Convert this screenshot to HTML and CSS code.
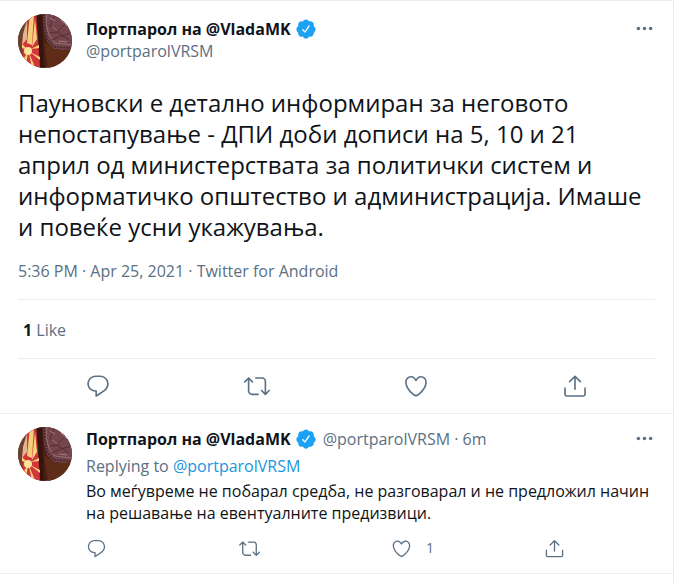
FILE: index.html
```
<!DOCTYPE html>
<html lang="mk">
<head>
    <meta charset="UTF-8">
    <meta name="viewport" content="width=device-width, initial-scale=1.0">
    <title>Портпарол на @VladaMK</title>
    <link rel="stylesheet" href="styles.css">
</head>
<body>
    <!-- Shared icons -->
    <svg class="sprite" aria-hidden="true">
        <symbol id="reply" viewBox="0 0 24 24">
            <path d="M14.046 2.242l-4.148-.01h-.002c-4.374 0-7.8 3.427-7.8 7.802 0 4.098 3.186 7.206 7.465 7.37v3.828c0 .108.044.286.12.403.142.225.384.347.632.347.138 0 .277-.038.402-.118.264-.168 6.473-4.14 8.088-5.506 1.902-1.61 3.04-3.97 3.043-6.312v-.017c-.006-4.367-3.43-7.787-7.8-7.788zm3.787 12.972c-1.134.96-4.862 3.405-6.772 4.643V16.67c0-.414-.335-.75-.75-.75h-.396c-3.66 0-6.318-2.476-6.318-5.886 0-3.534 2.768-6.302 6.3-6.302l4.147.01h.002c3.532 0 6.3 2.766 6.302 6.296-.003 1.91-.942 3.844-2.514 5.176z"/>
        </symbol>
        <symbol id="retweet" viewBox="0 0 24 24">
            <path d="M23.77 15.67c-.292-.293-.767-.293-1.06 0l-2.22 2.22V7.65c0-2.068-1.683-3.75-3.75-3.75h-5.85c-.414 0-.75.336-.75.75s.336.75.75.75h5.85c1.24 0 2.25 1.01 2.25 2.25v10.24l-2.22-2.22c-.293-.293-.768-.293-1.06 0s-.294.768 0 1.06l3.5 3.5c.145.147.337.22.53.22s.383-.072.53-.22l3.5-3.5c.294-.292.294-.767 0-1.06zm-10.66 3.28H7.26c-1.24 0-2.25-1.01-2.25-2.25V6.46l2.22 2.22c.148.147.34.22.532.22s.384-.073.53-.22c.293-.293.293-.768 0-1.06l-3.5-3.5c-.293-.294-.768-.294-1.06 0l-3.5 3.5c-.294.292-.294.767 0 1.06s.767.293 1.06 0l2.22-2.22V16.7c0 2.068 1.683 3.75 3.75 3.75h5.85c.414 0 .75-.336.75-.75s-.337-.75-.75-.75z"/>
        </symbol>
        <symbol id="like" viewBox="0 0 24 24">
            <path d="M12 21.638h-.014C9.403 21.59 1.95 14.856 1.95 8.478c0-3.064 2.525-5.754 5.403-5.754 2.29 0 3.83 1.58 4.646 2.73.814-1.148 2.354-2.73 4.645-2.73 2.88 0 5.404 2.69 5.404 5.755 0 6.376-7.454 13.11-10.037 13.157H12zM7.354 4.225c-2.08 0-3.903 1.988-3.903 4.255 0 5.74 7.034 11.596 8.55 11.658 1.518-.062 8.55-5.917 8.55-11.658 0-2.267-1.823-4.255-3.903-4.255-2.528 0-3.94 2.936-3.952 2.965-.23.562-1.156.562-1.387 0-.014-.03-1.425-2.965-3.954-2.965z"/>
        </symbol>
        <symbol id="share" viewBox="0 0 24 24">
            <path d="M17.53 7.47l-5-5c-.293-.293-.768-.293-1.06 0l-5 5c-.294.293-.294.768 0 1.06s.767.294 1.06 0l3.72-3.72V15c0 .414.336.75.75.75s.75-.336.75-.75V4.81l3.72 3.72c.146.147.338.22.53.22s.384-.072.53-.22c.293-.293.293-.767 0-1.06z"/>
            <path d="M19.708 21.944H4.292C3.028 21.944 2 20.916 2 19.652V14c0-.414.336-.75.75-.75s.75.336.75.75v5.652c0 .437.355.792.792.792h15.416c.437 0 .792-.355.792-.792V14c0-.414.336-.75.75-.75s.75.336.75.75v5.652c0 1.264-1.028 2.292-2.292 2.292z"/>
        </symbol>
        <symbol id="more" viewBox="0 0 24 24">
            <circle cx="5" cy="12" r="2"/>
            <circle cx="12" cy="12" r="2"/>
            <circle cx="19" cy="12" r="2"/>
        </symbol>
        <symbol id="verified" viewBox="0 0 24 24">
            <path d="M22.5 12.5c0-1.58-.875-2.95-2.148-3.6.154-.435.238-.905.238-1.4 0-2.21-1.71-3.998-3.818-3.998-.47 0-.92.084-1.336.25C14.818 2.415 13.51 1.5 12 1.5s-2.816.917-3.437 2.25c-.415-.165-.866-.25-1.336-.25-2.11 0-3.818 1.79-3.818 4 0 .494.083.964.237 1.4-1.272.65-2.147 2.018-2.147 3.6 0 1.495.782 2.798 1.942 3.486-.02.17-.032.34-.032.514 0 2.21 1.708 4 3.818 4 .47 0 .92-.086 1.335-.25.62 1.334 1.926 2.25 3.437 2.25 1.512 0 2.818-.916 3.437-2.25.415.163.865.248 1.336.248 2.11 0 3.818-1.79 3.818-4 0-.174-.012-.344-.033-.513 1.158-.687 1.943-1.99 1.943-3.484zm-6.616-3.334l-4.334 6.5c-.145.217-.382.334-.625.334-.143 0-.288-.04-.416-.126l-.115-.094-2.415-2.415c-.293-.293-.293-.768 0-1.06s.768-.294 1.06 0l1.77 1.767 3.825-5.74c.23-.345.696-.436 1.04-.207.346.23.44.696.21 1.04z"/>
        </symbol>
        <!-- Flag and carved emblem on dark wood -->
        <symbol id="avatar" viewBox="0 0 54 54">
            <rect width="54" height="54" fill="#4a2015"/>
            <path d="M0 0h13L6 54H0z" fill="#6b4230"/>
            <path d="M26 28l12 8h16v18H30z" fill="#5f2c18"/>
            <path d="M19 0h5l2 54h-4z" fill="#35140e"/>
            <path d="M11 0h7l2 26 2 28H5l-1-24z" fill="#d2353a"/>
            <path d="M12 0h4l-2 31-5-2z" fill="#f3cf7c"/>
            <path d="M17 5l2 20-5 8zM4 30l6 6-6-2zM4 47l6-9-2 14zM11 39l6 14-3 1zM13 35l8-4v3zM12 38l10 5v3z" fill="#f6d37a"/>
            <circle cx="10" cy="37" r="4" fill="#fae39a"/>
            <path d="M5 20l4-14v19l-5 6z" fill="#e3b48e"/>
            <path d="M25 0h29v35l-9 1-9-1-7-7-3-11z" fill="#74464b"/>
            <path d="M29 0l-1 10 3 11 6 8 17 2" fill="none" stroke="#9a6e72" stroke-width="1"/>
            <path d="M26 0l1 13 2 12 7 8 18 1" fill="none" stroke="#4b2a2f" stroke-width="2" stroke-dasharray="2 1"/>
            <path d="M37 0l-5 12 7 6 8-8-5-9M32 19l7-1 12 8M47 10l7 7M34 26l9-4 10-3" fill="none" stroke="#532e34" stroke-width="1"/>
            <path d="M32 4l5 3M43 6l6 6M34 13l5 4M41 27l8 1" fill="none" stroke="#a77d81" stroke-width="1"/>
        </symbol>
    </svg>

    <main class="timeline">
        <!-- Main tweet -->
        <article class="tweet">
            <header class="tweet-header">
                <svg class="avatar" role="img" aria-label="Портпарол"><use href="#avatar"/></svg>
                <div class="author">
                    <div class="name-line">
                        <a class="name" href="#">Портпарол на @VladaMK</a>
                        <svg class="badge"><use href="#verified"/></svg>
                    </div>
                    <a class="handle" href="#">@portparolVRSM</a>
                </div>
                <button class="more" aria-label="More"><svg class="icon-small"><use href="#more"/></svg></button>
            </header>
            <p class="tweet-text">Пауновски е детално информиран за неговото непостапување - ДПИ доби дописи на 5, 10 и 21 април од министерствата за политички систем и информатичко општество и администрација. Имаше и повеќе усни укажувања.</p>
            <div class="meta">5:36 PM · Apr 25, 2021 · Twitter for Android</div>
            <div class="stats"><a class="stat" href="#"><strong>1</strong> Like</a></div>
            <div class="actions">
                <button class="action" aria-label="Reply"><svg class="icon"><use href="#reply"/></svg></button>
                <button class="action" aria-label="Retweet"><svg class="icon"><use href="#retweet"/></svg></button>
                <button class="action" aria-label="Like"><svg class="icon"><use href="#like"/></svg></button>
                <button class="action" aria-label="Share"><svg class="icon"><use href="#share"/></svg></button>
            </div>
        </article>

        <!-- Reply -->
        <article class="tweet reply">
            <svg class="avatar" role="img" aria-label="Портпарол"><use href="#avatar"/></svg>
            <div class="reply-body">
                <div class="reply-header">
                    <div class="name-line">
                        <a class="name" href="#">Портпарол на @VladaMK</a>
                        <svg class="badge"><use href="#verified"/></svg>
                        <span class="handle reply-handle">@portparolVRSM · 6m</span>
                    </div>
                    <button class="more" aria-label="More"><svg class="icon-small"><use href="#more"/></svg></button>
                </div>
                <div class="replying">Replying to <a class="mention" href="#">@portparolVRSM</a></div>
                <p class="reply-text">Во меѓувреме не побарал средба, не разговарал и не предложил начин на решавање на евентуалните предизвици.</p>
                <div class="reply-actions">
                    <button class="action" aria-label="Reply"><svg class="icon-small"><use href="#reply"/></svg></button>
                    <button class="action" aria-label="Retweet"><svg class="icon-small"><use href="#retweet"/></svg></button>
                    <button class="action" aria-label="Like"><svg class="icon-small"><use href="#like"/></svg><span class="count">1</span></button>
                    <button class="action" aria-label="Share"><svg class="icon-small"><use href="#share"/></svg></button>
                </div>
            </div>
        </article>
    </main>
</body>
</html>
```

FILE: styles.css
```
/* General page settings */
* {
    box-sizing: border-box;
}

body {
    margin: 0;
    background: #fff;
    color: #0f1419;
    font-family: "Open Sans", "Noto Sans", sans-serif;
    font-size: 16px;
    line-height: 22px;
}

a {
    color: inherit;
    text-decoration: none;
}

p {
    margin: 0;
}

button {
    display: flex;
    align-items: center;
    padding: 0;
    border: 0;
    background: none;
    color: #5b7083;
    font: inherit;
    cursor: pointer;
}

svg {
    display: block;
    flex: none;
    fill: currentColor;
}

.sprite {
    position: absolute;
    width: 0;
    height: 0;
}

/* Timeline column */
.timeline {
    min-height: 100vh;
    margin-right: 4px;
    border-top: 1px solid #ebeef0;
    border-right: 1px solid #ebeef0;
}

.tweet {
    padding: 13px 18px 0;
    border-bottom: 1px solid #ebeef0;
}

/* Author row */
.tweet-header {
    display: flex;
    gap: 14px;
}

.avatar {
    width: 54px;
    height: 54px;
    border-radius: 50%;
}

.author {
    flex: 1;
    padding-top: 4px;
}

.name-line {
    display: flex;
    align-items: center;
    white-space: nowrap;
}

.name {
    font-weight: 700;
}

.badge {
    width: 22px;
    height: 22px;
    margin-left: 4px;
    color: #1da1f2;
}

.handle,
.meta,
.replying,
.stat {
    color: #5b7083;
}

.author .handle {
    display: block;
}

.more {
    align-self: flex-start;
    height: 28px;
}

/* Main tweet */
.tweet-text {
    margin-top: 19px;
    font-size: 24px;
    line-height: 31px;
}

.meta {
    padding: 18px 0 17px;
    border-bottom: 1px solid #ebeef0;
}

.stats {
    padding: 19px 5px 17px;
    border-bottom: 1px solid #ebeef0;
}

.stat strong {
    color: #0f1419;
}

.actions {
    display: grid;
    grid-template-columns: repeat(4, 1fr);
    justify-items: center;
    padding: 14px 0;
}

.icon {
    width: 26px;
    height: 26px;
}

.icon-small {
    width: 21px;
    height: 21px;
}

/* Reply */
.reply {
    display: flex;
    gap: 14px;
}

.reply-body {
    flex: 1;
    min-width: 0;
}

.reply-header {
    display: flex;
    justify-content: space-between;
    height: 24px;
}

.reply .more {
    height: 22px;
}

.reply-handle {
    margin-left: 6px;
}

.mention {
    color: #1b95e0;
}

.replying {
    padding: 4px 0 3px;
}

.reply-text {
    font-size: 16px;
}

.reply-actions {
    display: grid;
    grid-template-columns: repeat(4, 1fr);
    margin-right: -41px;
    padding: 13px 0 14px;
}

.count {
    margin-left: 14px;
    font-size: 14px;
}
```
